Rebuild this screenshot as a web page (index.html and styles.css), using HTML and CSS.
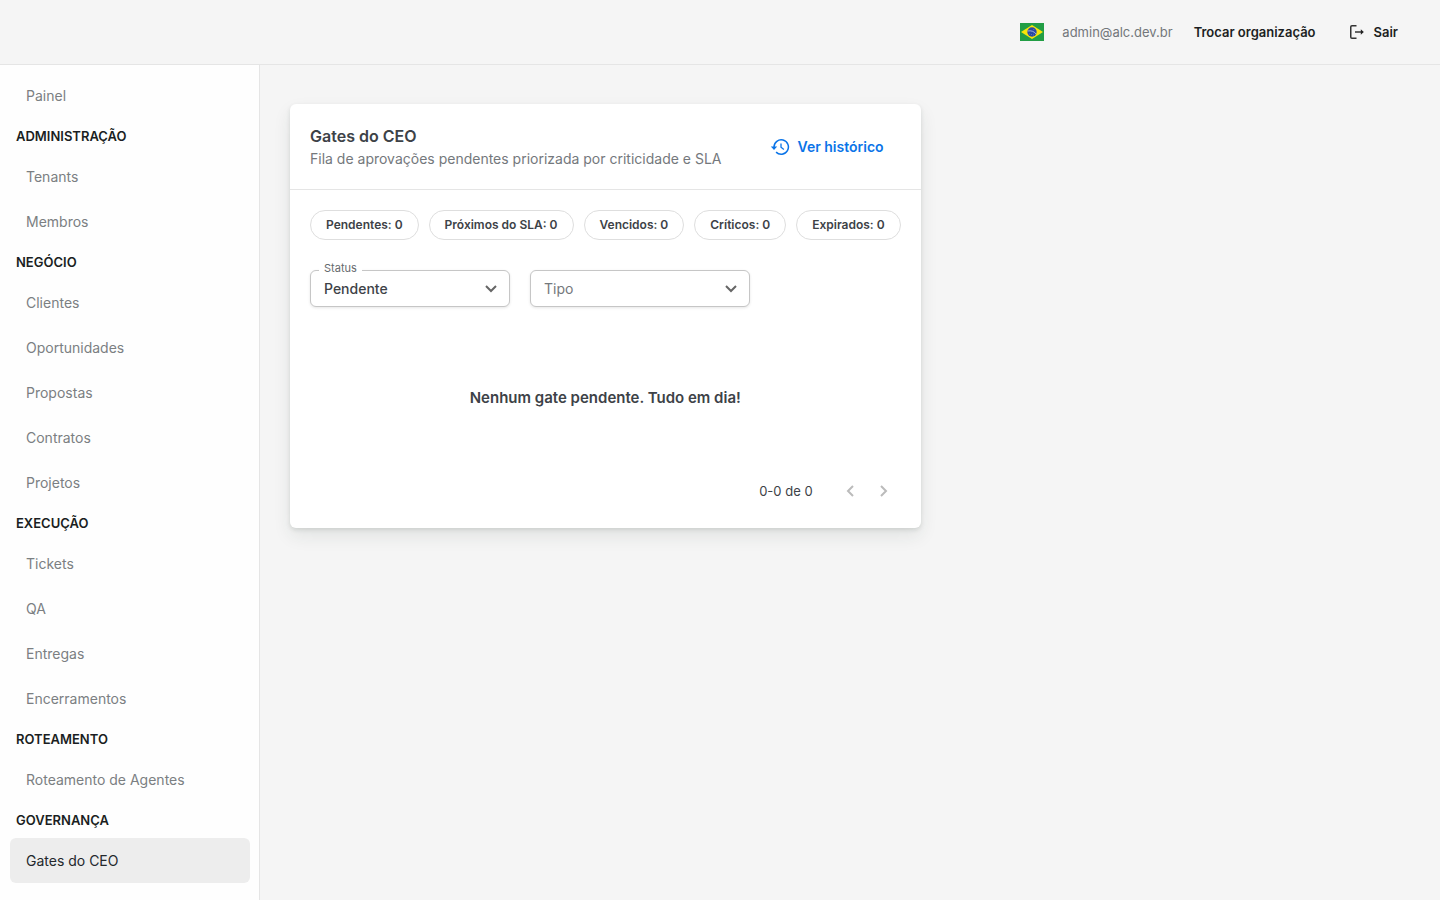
FILE: index.html
```html
<!DOCTYPE html>
<html lang="pt-BR">
<head>
<meta charset="utf-8">
<meta name="viewport" content="width=device-width, initial-scale=1">
<title>Gates do CEO</title>
<link rel="stylesheet" href="styles.css">
</head>
<body>
<header class="topbar">
  <button class="flag-button" type="button" aria-label="Idioma: português">
    <svg class="flag" viewBox="0 0 24 18" aria-hidden="true">
      <rect width="24" height="18" fill="#229e45"/>
      <path d="M12 16 1 9 12 2l11 7z" fill="#f8e509"/>
      <circle cx="12" cy="9" r="4.700" fill="#2b49a3"/>
      <path d="M7.700 8c3.200-.7 6.600.4 8.400 3" fill="none" stroke="#d5dcf0" stroke-width=".7"/>
      <path d="M9 11h.7M11 11.500h.7M13 12h.7M13.500 6.500h.7" stroke="#9fb0dc" stroke-width=".6"/>
    </svg>
  </button>
  <span class="user-email">admin@alc.dev.br</span>
  <button class="top-button" type="button">Trocar organização</button>
  <button class="top-button logout" type="button">
    <svg class="logout-icon" viewBox="0 0 16 16" aria-hidden="true">
      <path d="M7.500 1.750H3Q1.750 1.750 1.750 3v10q0 1.250 1.250 1.250h4.500" fill="none" stroke="#333" stroke-width="1.500"/>
      <path d="M6 8h7" fill="none" stroke="#333" stroke-width="1.500"/>
      <path d="M11.800 5.300 14.800 8l-3 2.700z" fill="#222"/>
    </svg>
    Sair
  </button>
</header>
<div class="shell">
  <nav class="sidebar" aria-label="Principal">
    <a class="nav-item" href="#">Painel</a>
    <h2 class="nav-heading">ADMINISTRAÇÃO</h2>
    <a class="nav-item" href="#">Tenants</a>
    <a class="nav-item" href="#">Membros</a>
    <h2 class="nav-heading">NEGÓCIO</h2>
    <a class="nav-item" href="#">Clientes</a>
    <a class="nav-item" href="#">Oportunidades</a>
    <a class="nav-item" href="#">Propostas</a>
    <a class="nav-item" href="#">Contratos</a>
    <a class="nav-item" href="#">Projetos</a>
    <h2 class="nav-heading">EXECUÇÃO</h2>
    <a class="nav-item" href="#">Tickets</a>
    <a class="nav-item" href="#">QA</a>
    <a class="nav-item" href="#">Entregas</a>
    <a class="nav-item" href="#">Encerramentos</a>
    <h2 class="nav-heading">ROTEAMENTO</h2>
    <a class="nav-item" href="#">Roteamento de Agentes</a>
    <h2 class="nav-heading">GOVERNANÇA</h2>
    <a class="nav-item active" href="#" aria-current="page">Gates do CEO</a>
  </nav>
  <main class="content">
    <section class="card">
      <div class="card-header">
        <div>
          <h1 class="card-title">Gates do CEO</h1>
          <p class="card-subtitle">Fila de aprovações pendentes priorizada por criticidade e SLA</p>
        </div>
        <a class="history-link" href="#">
          <svg class="history-icon" viewBox="0 0 20 20" fill="none" stroke="currentColor" aria-hidden="true">
            <path d="M4 10a7.200 7.200 0 1 1 2.100 5.100" stroke-width="1.500"/>
            <path d="M.8 9.500h6.400L4 12.900z" fill="currentColor" stroke="none"/>
            <path d="M11 6.500v3.700l2.900 2.200" stroke-width="1.300"/>
          </svg>
          Ver histórico
        </a>
      </div>
      <div class="card-body">
        <ul class="chips">
          <li class="chip">Pendentes: 0</li>
          <li class="chip">Próximos do SLA: 0</li>
          <li class="chip">Vencidos: 0</li>
          <li class="chip">Críticos: 0</li>
          <li class="chip">Expirados: 0</li>
        </ul>
        <div class="filters">
          <div class="field field-status">
            <label class="field-label" for="status">Status</label>
            <select class="field-select" id="status"><option>Pendente</option></select>
            <svg class="chevron" viewBox="0 0 12 8" aria-hidden="true"><path d="M1 1l5 5 5-5"/></svg>
          </div>
          <div class="field field-type">
            <select class="field-select placeholder" id="tipo" aria-label="Tipo"><option>Tipo</option></select>
            <svg class="chevron" viewBox="0 0 12 8" aria-hidden="true"><path d="M1 1l5 5 5-5"/></svg>
          </div>
        </div>
        <p class="empty">Nenhum gate pendente. Tudo em dia!</p>
        <div class="pagination">
          <span class="page-range">0-0 de 0</span>
          <button class="page-button" type="button" disabled aria-label="Página anterior">
            <svg class="page-icon" viewBox="0 0 8 12" aria-hidden="true"><path d="M7 1L2 6l5 5"/></svg>
          </button>
          <button class="page-button" type="button" disabled aria-label="Próxima página">
            <svg class="page-icon" viewBox="0 0 8 12" aria-hidden="true"><path d="M1 1l5 5-5 5"/></svg>
          </button>
        </div>
      </div>
    </section>
  </main>
</div>
</body>
</html>
```
FILE: styles.css
```css
* { box-sizing: border-box; }

body {
  margin: 0;
  min-height: 100vh;
  display: flex;
  flex-direction: column;
  background: #f5f5f5;
  color: #3d4247;
  font-family: Inter, "Liberation Sans", sans-serif;
  font-size: 14px;
  line-height: 20px;
}

button, select { font: inherit; color: inherit; }
button { border: 0; padding: 0; background: none; }
a { text-decoration: none; color: inherit; }
h1, h2, p, ul { margin: 0; padding: 0; }

.topbar {
  height: 65px;
  display: flex;
  align-items: center;
  justify-content: flex-end;
  padding: 0 42px;
  border-bottom: 1px solid #e5e5e5;
}
.flag-button { display: flex; margin-right: 18px; }
.flag { width: 24px; height: 18px; display: block; }
.user-email { margin-right: 21px; font-size: 13px; color: #73777b; }
.top-button {
  display: flex;
  align-items: center;
  gap: 9px;
  font-size: 13px;
  font-weight: 600;
  color: #1c1f22;
}
.logout { margin-left: 33px; }
.logout-icon { width: 16px; height: 16px; }

.shell { flex: 1; display: flex; }
.sidebar {
  width: 260px;
  flex: none;
  padding: 8px 9px 8px 10px;
  background: #fefefe;
  border-right: 1px solid #e5e5e5;
}
.nav-item {
  display: flex;
  align-items: center;
  height: 45px;
  padding: 0 16px;
  border-radius: 6px;
  color: #7b7f82;
}
.nav-item.active { background: #ededed; color: #24282c; }
.nav-heading {
  height: 36px;
  padding: 0 6px;
  font-size: 13px;
  font-weight: 600;
  line-height: 36px;
  color: #1a1e22;
}

.content { flex: 1; min-width: 0; padding: 39px 30px; }
.card {
  width: fit-content;
  background: #fff;
  border-radius: 6px;
  box-shadow: 0 2px 4px rgba(30, 50, 45, .12), 0 8px 18px rgba(30, 50, 45, .09);
}
.card-header {
  display: flex;
  align-items: center;
  justify-content: space-between;
  padding: 20px 37px 20px 20px;
  border-bottom: 1px solid #e5e5e5;
}
.card-title { font-size: 16px; font-weight: 600; line-height: 24px; }
.card-subtitle { line-height: 21px; color: #74787c; }
.history-link {
  display: flex;
  align-items: center;
  gap: 8px;
  font-weight: 600;
  color: #0a74e8;
}
.history-icon { width: 20px; height: 20px; }

.card-body { padding: 20px; }
.chips { display: flex; flex-wrap: wrap; gap: 10px; list-style: none; }
.chip {
  height: 30px;
  padding: 0 15px;
  border: 1px solid #dedede;
  border-radius: 15px;
  font-size: 12px;
  font-weight: 600;
  line-height: 28px;
}
.filters { display: flex; gap: 20px; margin-top: 30px; }
.field { position: relative; }
.field-status { width: 200px; }
.field-type { width: 220px; }
.field-select {
  appearance: none;
  display: block;
  width: 100%;
  height: 37px;
  padding: 0 32px 0 13px;
  border: 1px solid #c6c6c6;
  border-radius: 6px;
  background: #fff;
  font-weight: 500;
  box-shadow: 0 1px 3px rgba(0, 0, 0, .1);
}
.field-select.placeholder { font-weight: 400; color: #74787c; }
.field-label {
  position: absolute;
  top: -10px;
  left: 9px;
  padding: 0 5px;
  background: #fff;
  font-size: 11px;
  line-height: 16px;
  color: #65696d;
}
.chevron {
  position: absolute;
  top: 15px;
  right: 13px;
  width: 12px;
  height: 8px;
  fill: none;
  stroke: #666;
  stroke-width: 2;
  pointer-events: none;
}
.empty {
  padding: 80px 0 65px;
  text-align: center;
  font-size: 15px;
  font-weight: 600;
  line-height: 22px;
}
.pagination {
  display: flex;
  align-items: center;
  justify-content: flex-end;
  height: 34px;
  font-size: 13px;
}
.page-range { margin-right: 20px; }
.page-button {
  width: 34px;
  height: 34px;
  display: flex;
  align-items: center;
  justify-content: center;
}
.page-icon {
  width: 8px;
  height: 12px;
  fill: none;
  stroke: #bbb;
  stroke-width: 2;
}
```
